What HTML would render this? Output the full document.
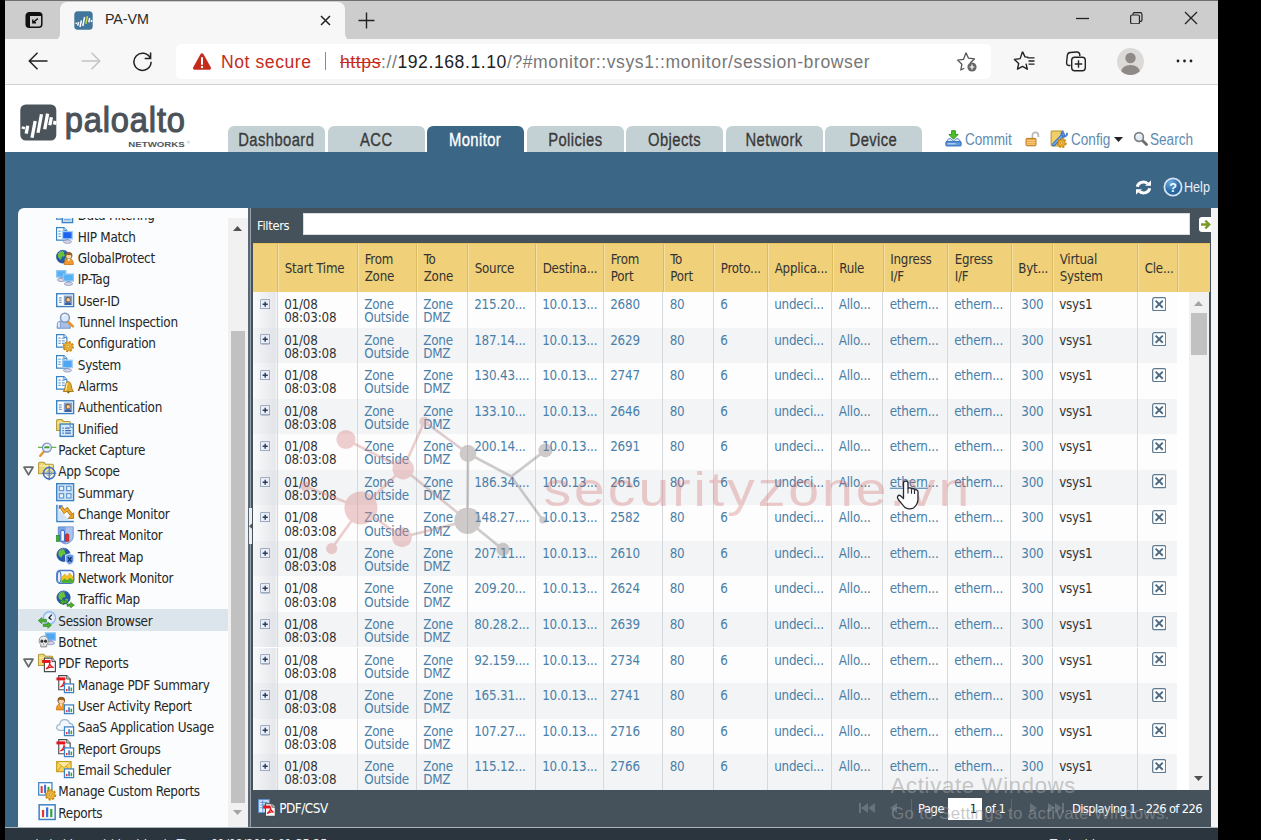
<!DOCTYPE html>
<html lang="en"><head><meta charset="utf-8"><title>PA-VM</title>
<style>
*{box-sizing:border-box;margin:0;padding:0}
html,body{width:1261px;height:840px;overflow:hidden;background:#000}
body{position:relative;font-family:"DejaVu Sans Condensed","Liberation Sans",sans-serif;font-size:12.8px;color:#333}
.abs{position:absolute}
#win{position:absolute;left:5px;top:0;width:1212.5px;height:840px;overflow:hidden;background:#3c6685}
/* browser chrome */
#tabstrip{position:absolute;left:0;top:0;width:100%;height:38.5px;background:#cdcdcd;border-top:1px solid #707070}
#acttab{position:absolute;left:55px;top:1px;width:285px;height:38px;background:#f7f7f7;border-radius:7px 7px 0 0}
#toolbar{position:absolute;left:0;top:38.5px;width:100%;height:46px;background:#f7f7f7;border-bottom:1px solid #d2d2d2}
#addr{position:absolute;left:171px;top:5.5px;width:815px;height:35px;background:#fff;border-radius:5px}
.seg{font-family:"Liberation Sans",sans-serif;white-space:nowrap;position:absolute}
/* page header */
#hdr{position:absolute;left:0;top:84.5px;width:100%;height:67.5px;background:#fff}
.ntab{position:absolute;top:125.5px;height:26.5px;width:97px;background:#c4d1d4;border-radius:6px 6px 0 0;text-align:center;color:#3a3a3a}
.ntab.on{background:#3c6685;color:#fff}
.ntab span{display:inline-block;font-family:"Liberation Sans",sans-serif;font-size:17.6px;line-height:29.5px;transform:scaleX(.84);transform-origin:50% 50%;white-space:nowrap;letter-spacing:.5px;-webkit-text-stroke:.35px currentColor}
.tl{position:absolute;font-family:"Liberation Sans",sans-serif;font-size:15.6px;color:#5d8bb2;white-space:nowrap;transform:scaleX(.87);transform-origin:0 50%;line-height:20px}
/* sidebar */
#side{position:absolute;left:13px;top:207.5px;width:230px;height:620px;background:#fafcfd;border-radius:6px 0 0 0;overflow:hidden}
#tree{position:absolute;left:0;top:10.3px;width:211px;height:610px;overflow:hidden}
.ti{position:absolute;left:0;width:211px;height:21.33px;line-height:21.33px;white-space:nowrap;color:#262626;font-size:13.4px;letter-spacing:-.3px}
.ti.sel{background:#dde5ec}
.ti svg{position:absolute;top:1.4px;width:18.3px;height:18.3px;overflow:visible}
.ti b{font-weight:normal;position:absolute;top:1.3px}
#sscroll{position:absolute;left:210px;top:10.3px;width:20px;height:610px;background:#f1f1f1}
#sthumb{position:absolute;left:3px;top:113px;width:14px;height:472px;background:#c1c1c1}
/* grid */
#grid{position:absolute;left:245px;top:207.5px;width:961px;height:619px;background:#45525c}
#gridwhite{position:absolute;left:1206px;top:207.5px;width:7px;height:619px;background:#f4f4f4}
#split{position:absolute;left:243px;top:207.5px;width:1.6px;height:619.5px;background:#5a6673}
#split2{position:absolute;left:244.5px;top:207.5px;width:1px;height:619.5px;background:#97a1ab}
#filters{position:absolute;left:7px;top:0;height:35px;line-height:35px;color:#fff;font-size:12.8px;letter-spacing:-.3px}
#finput{position:absolute;left:53px;top:5px;width:887px;height:22.5px;background:#fff;border:1px solid #d8dde2}
#ghead{position:absolute;left:3px;top:35px;width:956.5px;height:49.5px;background:#f0d078;border-top:1.5px solid #e9c45e}
.hc{position:absolute;top:0;height:48px;border-left:1px solid #f6e0a2;box-shadow:-1px 0 0 #dcbb5e;font-size:13.2px;letter-spacing:-.2px;line-height:17.5px;color:#333;padding-left:5.7px;white-space:nowrap;overflow:hidden;display:flex;align-items:center;padding-top:1.6px}
#gbody{position:absolute;left:2.5px;top:84.5px;width:956.5px;height:497.5px;background:#fff;overflow:hidden}
.row{position:absolute;left:0;width:924px;height:35.55px;background:#fdfdfd}
.row.alt{background:#f2f4f6}
.c{position:absolute;top:0;height:35.55px;border-left:1px solid #d6d9dc;padding:6px 0 0 6.7px;font-size:13.3px;letter-spacing:-.2px;line-height:13.2px;color:#4a7fa8;white-space:nowrap;overflow:hidden}
.c.k{color:#333}
.c.r{text-align:right;padding-right:8px}
.c.x{border-left:none;background:linear-gradient(90deg,#fafafb,#e6e8ec 92%,#f6f7f8)}
.row.alt .c.x{background:linear-gradient(90deg,#f3f4f6,#e1e4e9 92%,#eef0f2)}
#gscroll{position:absolute;left:936px;top:0;width:20.5px;height:497.5px;background:#f1f1f1}
#gthumb{position:absolute;left:2.5px;top:21px;width:15.5px;height:41.5px;background:#c1c1c1}
#gfoot{position:absolute;left:0;top:582px;width:961px;height:37px;background:#45525c;color:#fff}
#footer{position:absolute;left:0;top:827.5px;width:100%;height:13px;background:#2b353e;overflow:hidden}
#footline{position:absolute;left:0;top:826.5px;width:100%;height:1.2px;background:#aab4bb}

</style></head><body>
<div id="win"><div id="tabstrip"><div id="acttab"></div><svg class="abs" style="left:19.5px;top:9.5px" width="18" height="18" viewBox="0 0 18 18"><rect x="1.200" y="1.800" width="15.600" height="14.400" rx="3" fill="none" stroke="#111" stroke-width="1.500"/><path d="M1.200 5H16.800V4.500Q16.800 1.800 14 1.800H4Q1.200 1.800 1.200 4.500Z" fill="#111"/><path d="M1.200 4H5V16.200H4Q1.200 16.200 1.200 13.500Z" fill="#111"/><path d="M12.800 7.600L8.400 11.200M7.800 8.600V11.800H11" fill="none" stroke="#111" stroke-width="1.400"/></svg><div class="abs" style="left:49px;top:32.500px;width:6px;height:6px;background:#f7f7f7"><div style="width:6px;height:6px;background:#cdcdcd;border-radius:0 0 6px 0"></div></div><div class="abs" style="left:340px;top:32.500px;width:6px;height:6px;background:#f7f7f7"><div style="width:6px;height:6px;background:#cdcdcd;border-radius:0 0 0 6px"></div></div><svg class="abs" style="left:68.5px;top:9.5px" width="19" height="19" viewBox="0 0 19 19"><rect x=".3" y=".3" width="18.400" height="18.400" rx="3.500" fill="#41759b"/><g stroke="#fff" stroke-width="1.500"><path d="M2.400 11.600l-.3 1.400"/><path d="M4.600 11l-.8 3.600"/><path d="M7.400 9.400l-1.400 6.600"/><path d="M10.600 6l-1.800 9"/><path d="M13.400 5.200l-1.500 7.600" stroke="#c3d94e"/><path d="M15.700 7l-.9 4.400"/><path d="M17.700 9l-.4 2"/></g></svg><div class="seg" style="left:100px;top:10.200px;font-size:14.300px;line-height:16px;color:#2a2a2a;letter-spacing:-.1px">PA-VM</div><svg class="abs" style="left:314.5px;top:13.5px" width="11" height="11" viewBox="0 0 11 11"><path d="M1 1L10 10M10 1L1 10" stroke="#222" stroke-width="1.5"/></svg><svg class="abs" style="left:352.5px;top:10.5px" width="17" height="17" viewBox="0 0 17 17"><path d="M8.5 .5V16.5M.5 8.5H16.5" stroke="#222" stroke-width="1.4"/></svg><svg class="abs" style="left:1070.5px;top:15.5px" width="13" height="3" viewBox="0 0 13 3"><path d="M0 1.5H13" stroke="#222" stroke-width="1.3"/></svg><svg class="abs" style="left:1125.3px;top:10.600px" width="12.600" height="12.600" viewBox="0 0 14 14"><rect x=".7" y="3.3" width="9.8" height="9.8" rx="1.5" fill="none" stroke="#222" stroke-width="1.3"/><path d="M3.5 3V2.2Q3.5 .7 5 .7H11.3Q13.3 .7 13.3 2.7V9Q13.3 10.5 11.8 10.5H11" fill="none" stroke="#222" stroke-width="1.3"/></svg><svg class="abs" style="left:1178.5px;top:10px" width="14" height="14" viewBox="0 0 14 14"><path d="M1 1L13 13M13 1L1 13" stroke="#222" stroke-width="1.3"/></svg></div><div id="toolbar"><svg class="abs" style="left:22.5px;top:12.5px" width="21" height="20" viewBox="0 0 21 20"><path d="M19.5 10H2M9.5 1.8L1.3 10L9.5 18.2" fill="none" stroke="#222" stroke-width="1.5"/></svg><svg class="abs" style="left:75px;top:12.5px" width="21" height="20" viewBox="0 0 21 20"><path d="M1.5 10H19M11.5 1.8L19.7 10L11.5 18.2" fill="none" stroke="#c4c4c4" stroke-width="1.5"/></svg><svg class="abs" style="left:127px;top:12px" width="21" height="21" viewBox="0 0 21 21"><path d="M18.3 7.2A8.6 8.6 0 1 0 19.1 10.8" fill="none" stroke="#222" stroke-width="1.5"/><path d="M18.6 1.5V7.4H12.7" fill="none" stroke="#222" stroke-width="1.5"/></svg><div id="addr"><svg class="abs" style="left:15.5px;top:7.5px" width="20" height="19" viewBox="0 0 20 19"><path d="M10 1.2Q10.9 1.2 11.4 2.1L18.9 15.6Q19.6 17.6 17.6 17.8H2.4Q.4 17.6 1.1 15.6L8.6 2.1Q9.1 1.2 10 1.2Z" fill="#c42b1c"/><path d="M10 6v6" stroke="#fff" stroke-width="2" stroke-linecap="round"/><circle cx="10" cy="15" r="1.2" fill="#fff"/></svg><div class="seg" id="notsec" style="left:45px;top:7.4px;font-size:17.6px;line-height:22px;color:#c42b1c;letter-spacing:.55px">Not secure</div><div class="abs" style="left:149px;top:8px;width:1px;height:18px;background:#8a8a8a"></div><div class="seg" id="url" style="left:164px;top:7.4px;font-size:17.6px;line-height:22px;color:#777;letter-spacing:.57px"><span style="color:#c42b1c;text-decoration:line-through">https</span>://<span style="color:#222">192.168.1.10</span>/?#monitor::vsys1::monitor/session-browser</div><svg class="abs" style="left:780px;top:6.5px" width="23" height="22" viewBox="0 0 23 22"><path d="M10 1.8l2.5 5.4 5.9.7-4.3 4M8.2 17.2L4.8 19l1.1-5.8-4.3-4.1 5.9-.7L10 1.8" fill="none" stroke="#555" stroke-width="1.3" stroke-linejoin="round"/><circle cx="16" cy="16" r="4.6" fill="#666"/><path d="M16 13.6v4.8M13.6 16h4.8" stroke="#fff" stroke-width="1.2"/></svg></div><svg class="abs" style="left:1007.5px;top:11.5px" width="23" height="22" viewBox="0 0 23 22"><path d="M9.5 1.6l2.5 5.3 3.2.4M13 13.6l1.3 5.6-4.8-2.8-5 2.8 1.2-5.7L1.4 9.400l5.800-.8L9.5 1.600" fill="none" stroke="#222" stroke-width="1.4" stroke-linejoin="round"/><path d="M14.500 7.800H21.500M15.500 11H21.500M15.500 14.200H21.500" stroke="#222" stroke-width="1.300"/></svg><svg class="abs" style="left:1060px;top:12px" width="22" height="22" viewBox="0 0 22 22"><path d="M5.500 14.500H4.500Q1.300 14.500 1.600 11.300L2.300 4.500Q2.600 1.800 5.300 1.500L11.500 1Q14.300 .8 14.800 3.500V5" fill="none" stroke="#222" stroke-width="1.400"/><rect x="6.700" y="6.200" width="13.600" height="13.600" rx="3" fill="#f7f7f7" stroke="#222" stroke-width="1.400"/><path d="M13.500 9.300v7.400M9.800 13h7.400" stroke="#222" stroke-width="1.400"/></svg><svg class="abs" style="left:1111.500px;top:9px" width="27" height="27" viewBox="0 0 27 27"><defs><clipPath id="pc"><circle cx="13.500" cy="13.500" r="13.500"/></clipPath></defs><circle cx="13.500" cy="13.500" r="13.500" fill="#dcdad8"/><g clip-path="url(#pc)" fill="#8f8a88"><circle cx="13.500" cy="10" r="5.200"/><ellipse cx="13.500" cy="24" rx="9.500" ry="7"/></g></svg><svg class="abs" style="left:1170.500px;top:20.500px" width="17" height="4" viewBox="0 0 17 4"><circle cx="2" cy="2" r="1.400" fill="#222"/><circle cx="8.500" cy="2" r="1.400" fill="#222"/><circle cx="15" cy="2" r="1.400" fill="#222"/></svg></div><div id="hdr"></div><svg class="abs" style="left:15px;top:103.5px" width="180" height="46" viewBox="0 0 180 46"><rect x=".3" y=".5" width="36" height="36" rx="5.500" fill="#4b545b"/><g stroke="#fff" stroke-width="3.300"><path d="M3.700 22.600L3 25"/><path d="M7.700 21.800L6.200 29.600"/><path d="M15.200 17L12 33.800"/><path d="M21.500 10.200L18 28.800"/><path d="M27.600 9.600L24.700 25.200"/><path d="M31.400 13.200L29.800 21.200"/><path d="M35.200 16.800L34.400 20.600"/></g><text transform="translate(44.800 27.700) scale(.92 1)" font-family="Liberation Sans,sans-serif" font-size="35.500" fill="#4b5259" stroke="#4b5259" stroke-width="1.150" letter-spacing=".9">paloalto</text><text x="108.300" y="43" font-family="Liberation Sans,sans-serif" font-weight="bold" font-size="7.600" fill="#50575e" textLength="56.500" lengthAdjust="spacingAndGlyphs">NETWORKS</text><text x="167" y="39.500" font-family="Liberation Sans,sans-serif" font-size="4" fill="#6b7279">©</text></svg><div class="ntab" style="left:223.0px"><span>Dashboard</span></div><div class="ntab" style="left:322.5px"><span>ACC</span></div><div class="ntab on" style="left:422.0px"><span>Monitor</span></div><div class="ntab" style="left:521.5px"><span>Policies</span></div><div class="ntab" style="left:621.0px"><span>Objects</span></div><div class="ntab" style="left:720.5px"><span>Network</span></div><div class="ntab" style="left:820.0px"><span>Device</span></div><svg class="abs" style="left:939.5px;top:130px" viewBox="0 0 16 16" width="17" height="17"><path d="M6.200 .6H9.800V4.200H12.400L8 8.600L3.600 4.200H6.200Z" fill="#4cc02c" stroke="#2c8a14" stroke-width=".8"/><path d="M1.200 11.200L3.400 8.200H5.400L7.999 10.400L10.600 8.200H12.600L14.800 11.200Z" fill="#dbe8f6" stroke="#3f78c0" stroke-width=".8"/><rect x=".8" y="11" width="14.400" height="4" rx=".8" fill="#5f9ade" stroke="#2f68b4" stroke-width=".9"/><path d="M2.400 13H10" stroke="#cfe2f8" stroke-width=".9"/></svg><div class="tl" style="left:960px;top:129.5px">Commit</div><svg class="abs" style="left:1018.5px;top:130.5px" viewBox="0 0 16 16" width="16" height="16"><path d="M8.400 7.800V4.600C8.400 2.400 9.800 1.400 11.400 1.400S14.400 2.400 14.400 4.600V6" fill="none" stroke="#b9b9b9" stroke-width="1.700"/><rect x="2" y="7.400" width="10" height="7.400" rx="1" fill="#eea53a" stroke="#b06f12" stroke-width=".9"/><path d="M2.600 9.600H11.400M2.600 11.400H11.400M2.600 13.200H11.400" stroke="#f9d79a" stroke-width=".8"/></svg><svg class="abs" style="left:1044.5px;top:130px" viewBox="0 0 16 16" width="18" height="18"><path d="M1 1.600Q1 .8 1.800 .8H11.400Q12.200 .8 12.200 1.600V13.400Q12.200 14.200 11.400 14.200H1.800Q1 14.200 1 13.400Z" fill="#f0cf6a" stroke="#b8922c" stroke-width=".9"/><path d="M3.400 12.800L11.800 4.200" stroke="#2f6cc0" stroke-width="3.200" stroke-linecap="round"/><path d="M3.400 12.800L11.800 4.200" stroke="#6ea6ee" stroke-width="1.600" stroke-linecap="round"/><circle cx="12.600" cy="3.400" r="2.400" fill="none" stroke="#3f7cd4" stroke-width="1.600" stroke-dasharray="11 4" transform="rotate(-20 12.600 3.400)"/><circle cx="10.4" cy="11.6" r="3.4" fill="none" stroke="#c98a12" stroke-width="2.2" stroke-dasharray="1.75 1.2"/><circle cx="10.4" cy="11.6" r="3" fill="#eeb53a" stroke="#c98a12" stroke-width=".7"/><circle cx="10.4" cy="11.6" r="1.1" fill="#fbe7a8" stroke="#b87a10" stroke-width=".6"/></svg><div class="tl" style="left:1066px;top:129.5px">Config</div><svg class="abs" style="left:1108.5px;top:136.500px" width="9" height="5" viewBox="0 0 9 5"><path d="M0 0H9L4.500 5Z" fill="#222"/></svg><svg class="abs" style="left:1127.5px;top:130.5px" viewBox="0 0 16 16" width="15" height="15"><path d="M9.600 9.600L14.400 14.400" stroke="#6b6b6b" stroke-width="3" stroke-linecap="round"/><circle cx="6.400" cy="6.400" r="4.700" fill="#e4edf7" stroke="#7f7f7f" stroke-width="1.700"/><path d="M3.800 5.600A2.900 2.900 0 0 1 6.600 3.400" stroke="#fff" stroke-width="1.100" fill="none"/></svg><div class="tl" style="left:1145px;top:129.500px">Search</div><svg class="abs" style="left:1129.500px;top:180px" width="17" height="15" viewBox="0 0 17 15"><path d="M2.300 6.800A6.200 5.600 0 0 1 12.600 3.600" fill="none" stroke="#fff" stroke-width="3"/><path d="M10 5.800H16V.4Z" fill="#fff"/><path d="M14.700 8.200A6.200 5.600 0 0 1 4.400 11.400" fill="none" stroke="#fff" stroke-width="3"/><path d="M7 9.200H1V14.600Z" fill="#fff"/></svg><svg class="abs" style="left:1157.500px;top:176.500px" width="20" height="20" viewBox="0 0 20 20"><defs><radialGradient id="hg" cx=".35" cy=".25" r=".9"><stop offset="0" stop-color="#6aa9dc"/><stop offset=".55" stop-color="#2c6ca6"/><stop offset="1" stop-color="#1c558c"/></radialGradient></defs><circle cx="10" cy="10" r="8.600" fill="url(#hg)" stroke="#d4e4f4" stroke-width="1.800"/><text x="10" y="14.600" text-anchor="middle" font-family="Liberation Sans,sans-serif" font-weight="bold" font-size="12.500" fill="#fff">?</text></svg><div class="abs" style="left:1179px;top:176.8px;font-family:'Liberation Sans',sans-serif;font-size:15.2px;line-height:20px;color:#e6eef7;transform:scaleX(.83);transform-origin:0 50%;white-space:nowrap">Help</div><div id="side"><div id="tree"><div class="ti" style="top:-13.63px"><svg style="left:38px" viewBox="0 0 16 16" width="17.07" height="17.07"><path d="M0.5 0.5H6.9L9.5 3.1V11.5H0.5Z" fill="#fff" stroke="#3b82c4" stroke-width="1"/><path d="M6.9 0.5V3.1H9.5" fill="#cfe2f5" stroke="#3b82c4" stroke-width=".8"/><path d="M2.1 3.7H4.1M5.1 3.7H7.7" stroke="#6f9fd0" stroke-width="1.1"/><path d="M2.1 6.0H4.1M5.1 6.0H7.7" stroke="#6f9fd0" stroke-width="1.1"/><path d="M2.1 8.3H4.1M5.1 8.3H7.7" stroke="#6f9fd0" stroke-width="1.1"/><rect x="5.5" y="7" width="9" height="7.5" fill="#d6e6f6" stroke="#3b82c4" stroke-width="1.2"/><path d="M7 9.500H13M7 12H13" stroke="#5d94cf" stroke-width="1"/></svg><b style="left:59.8px">Data Filtering</b></div><div class="ti" style="top:7.70px"><svg style="left:38px" viewBox="0 0 16 16" width="17.07" height="17.07"><path d="M0.5 0.5H6.9L9.5 3.1V11.5H0.5Z" fill="#fff" stroke="#3b82c4" stroke-width="1"/><path d="M6.9 0.5V3.1H9.5" fill="#cfe2f5" stroke="#3b82c4" stroke-width=".8"/><path d="M2.1 3.7H4.1M5.1 3.7H7.7" stroke="#6f9fd0" stroke-width="1.1"/><path d="M2.1 6.0H4.1M5.1 6.0H7.7" stroke="#6f9fd0" stroke-width="1.1"/><path d="M2.1 8.3H4.1M5.1 8.3H7.7" stroke="#6f9fd0" stroke-width="1.1"/><rect x="5.8" y="4" width="8.4" height="6.4" fill="#1e62f0" stroke="#9fcdf5" stroke-width="1.1"/><path d="M9.0 10.4V12.0H11.0V10.4Z" fill="#8f9ad0"/><ellipse cx="10.0" cy="12.8" rx="3.53" ry="1.5" fill="#d4d6e6" stroke="#8c90b8" stroke-width=".7"/></svg><b style="left:59.8px">HIP Match</b></div><div class="ti" style="top:29.03px"><svg style="left:38px" viewBox="0 0 16 16" width="17.07" height="17.07"><circle cx="6" cy="7.6" r="5.6" fill="#2459ad" stroke="#1c4488" stroke-width=".6"/><path d="M2.92 3.68C5.44 2.0 7.68 3.12 6.84 5.08C8.8 6.4799999999999995 7.12 8.16 5.72 7.319999999999999C4.32 8.719999999999999 5.16 10.959999999999999 3.48 9.559999999999999C0.96 8.16 1.2400000000000002 5.08 2.92 3.68Z" fill="#69c23a"/><path d="M7.96 8.719999999999999C10.2 8.16 10.48 10.399999999999999 8.52 11.52C7.4 10.959999999999999 7.12 9.559999999999999 7.96 8.719999999999999Z" fill="#69c23a"/><path d="M1.8000000000000007 5.08A5.04 5.04 0 0 1 7.68 2.84" stroke="#7fb0ee" stroke-width=".6" fill="none" opacity=".7"/><path d="M7.209999999999999 14.45C7.209999999999999 9.89 9.299999999999999 9.32 11.2 9.32C13.1 9.32 15.19 9.89 15.19 14.45Z" fill="#f39a2c" stroke="#c9700f" stroke-width=".7"/><path d="M10.155 9.51L11.2 11.79L12.245 9.51Z" fill="#fff"/><circle cx="11.2" cy="6.66" r="3.135" fill="#8c5a24"/><circle cx="11.2" cy="7.2299999999999995" r="2.1849999999999996" fill="#f8d3a8"/><path d="M8.73 6.47C9.774999999999999 4.76 12.625 4.76 13.669999999999998 6.47C12.149999999999999 5.9 10.25 5.9 8.73 6.47Z" fill="#8c5a24"/></svg><b style="left:59.8px">GlobalProtect</b></div><div class="ti" style="top:50.37px"><svg style="left:38px" viewBox="0 0 16 16" width="17.07" height="17.07"><rect x="0.6" y="0.6" width="8" height="5.6" fill="#56b0f4" stroke="#8cc4f3" stroke-width="1.1"/><path d="M3.5999999999999996 6.199999999999999V7.799999999999999H5.6V6.199999999999999Z" fill="#8f9ad0"/><ellipse cx="4.6" cy="8.6" rx="3.36" ry="1.5" fill="#d4d6e6" stroke="#8c90b8" stroke-width=".7"/><rect x="6.6" y="3.6" width="8.6" height="6" fill="#56b0f4" stroke="#8cc4f3" stroke-width="1.1"/><path d="M9.899999999999999 9.6V11.2H11.899999999999999V9.6Z" fill="#8f9ad0"/><ellipse cx="10.899999999999999" cy="12.0" rx="3.61" ry="1.5" fill="#d4d6e6" stroke="#8c90b8" stroke-width=".7"/></svg><b style="left:59.8px">IP-Tag</b></div><div class="ti" style="top:71.70px"><svg style="left:38px" viewBox="0 0 16 16" width="17.07" height="17.07"><rect x=".6" y="2.400" width="14.800" height="11.200" fill="#fff" stroke="#3b82c4" stroke-width="1.200"/><path d="M2.500 6H5M2.500 8H5M2.500 10H5" stroke="#6f9fd0" stroke-width="1"/><rect x="6.800" y="4" width="7.400" height="8.200" fill="#7ea2d6"/><circle cx="10.500" cy="7.400" r="2.300" fill="#8a5a22"/><circle cx="10.700" cy="7.700" r="1.500" fill="#f4d0a4"/><path d="M7.600 12.200C7.600 10 9 9.800 10.500 9.800S13.400 10 13.400 12.200Z" fill="#3d5f9a"/></svg><b style="left:59.8px">User-ID</b></div><div class="ti" style="top:93.03px"><svg style="left:38px" viewBox="0 0 16 16" width="17.07" height="17.07"><path d="M1 14.200C1 9 3 7.600 5.200 7.600H8.200C10.500 7.600 12.500 9 12.500 14.200Z" fill="#a9bfe4" stroke="#6f8fc8" stroke-width=".8"/><ellipse cx="2.600" cy="11.200" rx="1.500" ry="3" fill="#dfe8f7" stroke="#6f8fc8" stroke-width=".7"/><path d="M10.500 8.500L14.800 12.600" stroke="#e8922a" stroke-width="2.200" stroke-linecap="round"/><circle cx="7.800" cy="5" r="3.900" fill="#d9e8fa" stroke="#8497b8" stroke-width="1.300"/><path d="M5.600 4.200A2.600 2.600 0 0 1 8.400 2.400" stroke="#fff" stroke-width="1" fill="none"/></svg><b style="left:59.8px">Tunnel Inspection</b></div><div class="ti" style="top:114.36px"><svg style="left:38px" viewBox="0 0 16 16" width="17.07" height="17.07"><path d="M0.5 0.5H6.9L9.5 3.1V11.5H0.5Z" fill="#fff" stroke="#3b82c4" stroke-width="1"/><path d="M6.9 0.5V3.1H9.5" fill="#cfe2f5" stroke="#3b82c4" stroke-width=".8"/><path d="M2.1 3.7H4.1M5.1 3.7H7.7" stroke="#6f9fd0" stroke-width="1.1"/><path d="M2.1 6.0H4.1M5.1 6.0H7.7" stroke="#6f9fd0" stroke-width="1.1"/><path d="M2.1 8.3H4.1M5.1 8.3H7.7" stroke="#6f9fd0" stroke-width="1.1"/><circle cx="10.8" cy="11" r="3.8000000000000003" fill="none" stroke="#c98a12" stroke-width="2.2" stroke-dasharray="1.75 1.2"/><circle cx="10.8" cy="11" r="3.4000000000000004" fill="#eeb53a" stroke="#c98a12" stroke-width=".7"/><circle cx="10.8" cy="11" r="1.1" fill="#fbe7a8" stroke="#b87a10" stroke-width=".6"/></svg><b style="left:59.8px">Configuration</b></div><div class="ti" style="top:135.70px"><svg style="left:38px" viewBox="0 0 16 16" width="17.07" height="17.07"><path d="M0.5 0.5H6.9L9.5 3.1V11.5H0.5Z" fill="#fff" stroke="#3b82c4" stroke-width="1"/><path d="M6.9 0.5V3.1H9.5" fill="#cfe2f5" stroke="#3b82c4" stroke-width=".8"/><path d="M2.1 3.7H4.1M5.1 3.7H7.7" stroke="#6f9fd0" stroke-width="1.1"/><path d="M2.1 6.0H4.1M5.1 6.0H7.7" stroke="#6f9fd0" stroke-width="1.1"/><path d="M2.1 8.3H4.1M5.1 8.3H7.7" stroke="#6f9fd0" stroke-width="1.1"/><rect x="5.8" y="4.6" width="8.4" height="6.4" fill="#4fa6f2" stroke="#9fcdf5" stroke-width="1.1"/><path d="M9.0 11.0V12.6H11.0V11.0Z" fill="#8f9ad0"/><ellipse cx="10.0" cy="13.4" rx="3.53" ry="1.5" fill="#d4d6e6" stroke="#8c90b8" stroke-width=".7"/></svg><b style="left:59.8px">System</b></div><div class="ti" style="top:157.03px"><svg style="left:38px" viewBox="0 0 16 16" width="17.07" height="17.07"><path d="M0.5 0.5H6.9L9.5 3.1V11.5H0.5Z" fill="#fff" stroke="#3b82c4" stroke-width="1"/><path d="M6.9 0.5V3.1H9.5" fill="#cfe2f5" stroke="#3b82c4" stroke-width=".8"/><path d="M2.1 3.7H4.1M5.1 3.7H7.7" stroke="#6f9fd0" stroke-width="1.1"/><path d="M2.1 6.0H4.1M5.1 6.0H7.7" stroke="#6f9fd0" stroke-width="1.1"/><path d="M2.1 8.3H4.1M5.1 8.3H7.7" stroke="#6f9fd0" stroke-width="1.1"/><path d="M10.8 5.000000000000001C13.4 5.000000000000001 13.4 9.3 14.0 11.4L15.200000000000001 13.600000000000001H6.4L7.6000000000000005 11.4C8.200000000000001 9.3 8.200000000000001 5.000000000000001 10.8 5.000000000000001Z" fill="#e2ad2a" stroke="#9c7412" stroke-width=".8"/><path d="M10.0 6.000000000000001C9.0 7.800000000000001 9.200000000000001 10.8 8.4 12.8" stroke="#fbe9a6" stroke-width="1" fill="none"/><circle cx="10.8" cy="14.200000000000001" r="1" fill="#8a6510"/></svg><b style="left:59.8px">Alarms</b></div><div class="ti" style="top:178.36px"><svg style="left:38px" viewBox="0 0 16 16" width="17.07" height="17.07"><rect x=".6" y="2.400" width="14.800" height="11.200" fill="#fff" stroke="#3b82c4" stroke-width="1.200"/><path d="M2.500 6H5M2.500 8H5M2.500 10H5" stroke="#6f9fd0" stroke-width="1"/><rect x="6.800" y="4" width="7.400" height="8.200" fill="#7ea2d6"/><circle cx="10.500" cy="7.400" r="2.300" fill="#8a5a22"/><circle cx="10.700" cy="7.700" r="1.500" fill="#f4d0a4"/><path d="M7.600 12.200C7.600 10 9 9.800 10.500 9.800S13.400 10 13.400 12.200Z" fill="#3d5f9a"/></svg><b style="left:59.8px">Authentication</b></div><div class="ti" style="top:199.70px"><svg style="left:38px" viewBox="0 0 16 16" width="17.07" height="17.07"><path d="M0.5 1.7Q0.5 0.5 1.7 0.5H5.1L6.5 2.1H11.5Q12.5 2.1 12.5 3.3V10.0H0.5Z" fill="#ecd777" stroke="#b39a36" stroke-width=".9"/><path d="M1.3 3.5H11.7" stroke="#f9efb6" stroke-width="1"/><rect x="3.600" y="4.400" width="11.600" height="10.800" fill="#d9e8f8" stroke="#3b82c4" stroke-width="1.200"/><path d="M12.400 4.400V7.200H15.200" fill="#fff" stroke="#3b82c4" stroke-width=".8"/><path d="M5.600 8H6.800M8 8H12M5.600 10.200H6.800M8 10.200H13M5.600 12.400H6.800M8 12.400H13" stroke="#2f6fb8" stroke-width="1.100"/></svg><b style="left:59.8px">Unified</b></div><div class="ti" style="top:221.03px"><svg style="left:20px" viewBox="0 0 16 16" width="17.07" height="17.07"><path d="M0 6.400H16" stroke="#52b038" stroke-width="1"/><path d="M5.400 9.800L2 13.800" stroke="#e8962e" stroke-width="2.200" stroke-linecap="round"/><circle cx="7.800" cy="6.600" r="3.900" fill="#e3effc" stroke="#8497b8" stroke-width="1.200"/><path d="M5.600 6.400H10" stroke="#3f9a2a" stroke-width="1.600"/></svg><b style="left:40.3px">Packet Capture</b></div><div class="ti" style="top:242.36px"><svg style="left:5px;top:6px;width:11px;height:10px" viewBox="0 0 11 10"><path d="M1 1.200H10L5.500 8.800Z" fill="#f4f4f4" stroke="#6a6a6a" stroke-width="1.700" stroke-linejoin="round"/></svg><svg style="left:20px" viewBox="0 0 16 16" width="17.07" height="17.07"><path d="M0.5 1.5Q0.5 0.3 1.7 0.3H5.1L6.5 1.9000000000000001H12.5Q13.5 1.9000000000000001 13.5 3.0999999999999996V10.3H0.5Z" fill="#ecd777" stroke="#b39a36" stroke-width=".9"/><path d="M1.3 3.3H12.7" stroke="#f9efb6" stroke-width="1"/><circle cx="9.800" cy="9.800" r="5" fill="#f3e9a8" fill-opacity=".55" stroke="#3f6fc8" stroke-width="1.300"/><path d="M9.800 3.200V16M3.400 9.800H16" stroke="#3f6fc8" stroke-width="1"/><circle cx="9.800" cy="9.800" r="2.200" fill="none" stroke="#7a9ad8" stroke-width=".7"/></svg><b style="left:40.3px">App Scope</b></div><div class="ti" style="top:263.70px"><svg style="left:38px" viewBox="0 0 16 16" width="17.07" height="17.07"><rect x=".6" y=".6" width="14.800" height="14.800" fill="#d3e4f6" stroke="#3b82c4" stroke-width="1.200"/><rect x="2.9" y="2.9" width="3.800" height="3.800" fill="#e9f2fb" stroke="#5a97d2" stroke-width="1"/><rect x="2.9" y="9.3" width="3.800" height="3.800" fill="#e9f2fb" stroke="#5a97d2" stroke-width="1"/><rect x="9.3" y="2.9" width="3.800" height="3.800" fill="#e9f2fb" stroke="#5a97d2" stroke-width="1"/><rect x="9.3" y="9.3" width="3.800" height="3.800" fill="#e9f2fb" stroke="#5a97d2" stroke-width="1"/></svg><b style="left:59.8px">Summary</b></div><div class="ti" style="top:285.03px"><svg style="left:38px" viewBox="0 0 16 16" width="17.07" height="17.07"><path d="M.8 .6V15.200H15.600" fill="none" stroke="#3b82c4" stroke-width="1.300"/><path d="M1.500 4L12 14.500H1.500Z" fill="#cfe2f6"/><path d="M4.400 2.600L7.200 6.800L9.800 4.600L13.400 9.400" fill="none" stroke="#b87614" stroke-width="3"/><path d="M4.400 2.600L7.200 6.800L9.800 4.600L13.400 9.400" fill="none" stroke="#f0b030" stroke-width="1.600"/><path d="M15.400 7.600V12.600H10.600Z" fill="#eaa520" stroke="#a86c10" stroke-width=".7"/><path d="M2.400 1.200H6L2.400 4.800Z" fill="#3f78d0"/></svg><b style="left:59.8px">Change Monitor</b></div><div class="ti" style="top:306.36px"><svg style="left:38px" viewBox="0 0 16 16" width="17.07" height="17.07"><path d="M2 .8H15V9C15 13 11 15.400 8.500 15.600C6 15.400 2 13 2 9Z" fill="#7ea4e2" stroke="#5f88cc" stroke-width=".8"/><path d="M8.500 1.200V15.200C11 15 14.600 12.800 14.600 9V1.200Z" fill="#a9c3ee"/><rect x=".4" y="8.400" width="2.800" height="5" fill="#3cae3a" stroke="#228822" stroke-width=".6"/><path d="M4.200 13.400V4.600Q5.800 2.600 7.400 4.600V13.400Z" fill="#f4f8ff" stroke="#3f6fd0" stroke-width=".9"/><path d="M8.200 13.400V7.600Q9.700 5.800 11.200 7.600V13.400Z" fill="#e03428" stroke="#a81c14" stroke-width=".6"/></svg><b style="left:59.8px">Threat Monitor</b></div><div class="ti" style="top:327.69px"><svg style="left:38px" viewBox="0 0 16 16" width="17.07" height="17.07"><circle cx="6.6" cy="6.8" r="5.8" fill="#2459ad" stroke="#1c4488" stroke-width=".6"/><path d="M3.4099999999999997 2.74C6.02 1.0 8.34 2.16 7.47 4.1899999999999995C9.5 5.64 7.76 7.38 6.31 6.51C4.859999999999999 7.96 5.7299999999999995 10.28 3.9899999999999998 8.83C1.38 7.38 1.67 4.1899999999999995 3.4099999999999997 2.74Z" fill="#69c23a"/><path d="M8.629999999999999 7.96C10.95 7.38 11.239999999999998 9.7 9.209999999999999 10.86C8.049999999999999 10.28 7.76 8.83 8.629999999999999 7.96Z" fill="#69c23a"/><path d="M2.25 4.1899999999999995A5.22 5.22 0 0 1 8.34 1.87" stroke="#7fb0ee" stroke-width=".6" fill="none" opacity=".7"/><path d="M8.400 7.200L12 6L15.600 7.200V11C15.600 13.600 13.400 15.200 12 15.600C10.600 15.200 8.400 13.600 8.400 11Z" fill="#5f94e4" stroke="#dce9fb" stroke-width=".9"/><path d="M10.400 9L13.600 12.800M13.600 9L10.400 12.800" stroke="#16306e" stroke-width="1.200"/></svg><b style="left:59.8px">Threat Map</b></div><div class="ti" style="top:349.03px"><svg style="left:38px" viewBox="0 0 16 16" width="17.07" height="17.07"><rect x=".7" y="2.200" width="14.800" height="11.200" rx="3" fill="#f4f8fd" stroke="#4a7ac4" stroke-width="1.200"/><ellipse cx="2.800" cy="7.800" rx="1.600" ry="5" fill="#e8f0fb" stroke="#4a7ac4" stroke-width=".9"/><path d="M4.800 12.600V8.600L7.600 5.200L9.800 7.600L12 4.400L14.800 8V12.600Z" fill="#f5c21c" stroke="#c69a10" stroke-width=".5"/><path d="M4.800 12.800V11.600L7.400 9.200L9.800 10.800L12.400 8.600L14.800 11V12.800Z" fill="#45b034"/></svg><b style="left:59.8px">Network Monitor</b></div><div class="ti" style="top:370.36px"><svg style="left:38px" viewBox="0 0 16 16" width="17.07" height="17.07"><circle cx="6.6" cy="6.6" r="5.8" fill="#2459ad" stroke="#1c4488" stroke-width=".6"/><path d="M3.4099999999999997 2.54C6.02 0.7999999999999998 8.34 1.96 7.47 3.9899999999999998C9.5 5.4399999999999995 7.76 7.18 6.31 6.31C4.859999999999999 7.76 5.7299999999999995 10.08 3.9899999999999998 8.629999999999999C1.38 7.18 1.67 3.9899999999999998 3.4099999999999997 2.54Z" fill="#69c23a"/><path d="M8.629999999999999 7.76C10.95 7.18 11.239999999999998 9.5 9.209999999999999 10.66C8.049999999999999 10.08 7.76 8.629999999999999 8.629999999999999 7.76Z" fill="#69c23a"/><path d="M2.25 3.9899999999999998A5.22 5.22 0 0 1 8.34 1.67" stroke="#7fb0ee" stroke-width=".6" fill="none" opacity=".7"/><path d="M9.80 9.40L6.60 9.40L6.60 7.90L3.40 10.40L6.60 12.90L6.60 11.40L9.80 11.40Z" fill="#49b030" stroke="#2a7c1a" stroke-width=".5"/><path d="M9.60 14.20L12.80 14.20L12.80 15.70L16.00 13.20L12.80 10.70L12.80 12.20L9.60 12.20Z" fill="#49b030" stroke="#2a7c1a" stroke-width=".5"/></svg><b style="left:59.8px">Traffic Map</b></div><div class="ti sel" style="top:391.69px"><svg style="left:20px" viewBox="0 0 16 16" width="17.07" height="17.07"><circle cx="10" cy="6" r="5.400" fill="#cfe3fa" stroke="#8db6ea" stroke-width="1"/><circle cx="10" cy="6" r="3.800" fill="#e6f1fd"/><path d="M12 3.200L9.600 6L11.800 7.600" fill="none" stroke="#222" stroke-width="1.100"/><path d="M7.40 7.30L3.40 7.30L3.40 5.65L0.20 8.40L3.40 11.15L3.40 9.50L7.40 9.50Z" fill="#49b030" stroke="#2a7c1a" stroke-width=".5"/><path d="M4.60 13.50L8.60 13.50L8.60 15.15L11.80 12.40L8.60 9.65L8.60 11.30L4.60 11.30Z" fill="#49b030" stroke="#2a7c1a" stroke-width=".5"/></svg><b style="left:40.3px">Session Browser</b></div><div class="ti" style="top:413.03px"><svg style="left:20px" viewBox="0 0 16 16" width="17.07" height="17.07"><rect x="6.6" y="0.8" width="8.6" height="6.4" fill="#4fa6f2" stroke="#8cc4f3" stroke-width="1.1"/><path d="M9.899999999999999 7.2V8.8H11.899999999999999V7.2Z" fill="#8f9ad0"/><ellipse cx="10.899999999999999" cy="9.6" rx="3.61" ry="1.5" fill="#d4d6e6" stroke="#8c90b8" stroke-width=".7"/><path d="M1 7.800C1 4.800 3 3.600 5 3.600S9 4.800 9 7.800C9 9.600 8 10.400 7.600 10.800V13H2.400V10.800C2 10.400 1 9.600 1 7.800Z" fill="#ececec" stroke="#8a8a8a" stroke-width=".8"/><ellipse cx="3.400" cy="8" rx="1.300" ry="1.500" fill="#333"/><ellipse cx="6.600" cy="8" rx="1.300" ry="1.500" fill="#333"/><path d="M5 9.800L4.400 11H5.600Z" fill="#444"/><path d="M3.400 12V13M5 12V13M6.600 12V13" stroke="#888" stroke-width=".6"/></svg><b style="left:40.3px">Botnet</b></div><div class="ti" style="top:434.36px"><svg style="left:5px;top:6px;width:11px;height:10px" viewBox="0 0 11 10"><path d="M1 1.200H10L5.500 8.800Z" fill="#f4f4f4" stroke="#6a6a6a" stroke-width="1.700" stroke-linejoin="round"/></svg><svg style="left:20px" viewBox="0 0 16 16" width="17.07" height="17.07"><path d="M0.4 1.5Q0.4 0.3 1.6 0.3H5.0L6.4 1.9000000000000001H12.0Q13.0 1.9000000000000001 13.0 3.0999999999999996V10.100000000000001H0.4Z" fill="#ecd777" stroke="#b39a36" stroke-width=".9"/><path d="M1.2000000000000002 3.3H12.2" stroke="#f9efb6" stroke-width="1"/><path d="M5.6 3.6H12.2L15.2 6.6V15.4H5.6Z" fill="#fdfdfd" stroke="#4a4a4a" stroke-width="1"/><path d="M12.2 3.6V6.6H15.2" fill="#ddd" stroke="#4a4a4a" stroke-width=".8"/><rect x="3.5999999999999996" y="5.2" width="7.3999999999999995" height="2.6" fill="#e6151b"/><path d="M7.0 13.0C9.2 11.8 10.6 9.0 10.2 7.4C9.8 9.4 11.6 11.4 13.799999999999999 11.8C11.2 10.8 8.6 12.0 7.0 13.0Z" fill="none" stroke="#e0181d" stroke-width="1.1"/></svg><b style="left:40.3px">PDF Reports</b></div><div class="ti" style="top:455.69px"><svg style="left:38px" viewBox="0 0 16 16" width="17.07" height="17.07"><path d="M2.4 0.5H9.4L12.4 3.5V12.9H2.4Z" fill="#fdfdfd" stroke="#4a4a4a" stroke-width="1"/><path d="M9.4 0.5V3.5H12.4" fill="#ddd" stroke="#4a4a4a" stroke-width=".8"/><rect x="0.3999999999999999" y="2.1" width="7.8" height="2.6" fill="#e6151b"/><path d="M3.8 10.5C6.0 9.3 7.4 6.5 7.0 4.9C6.6 6.9 8.4 8.9 11.0 9.3C8.4 8.3 5.4 9.5 3.8 10.5Z" fill="none" stroke="#e0181d" stroke-width="1.1"/><rect x="7.4" y="7.8" width="8" height="7.6" fill="#fff" stroke="#3b82c4" stroke-width="1.1"/><path d="M9.4 14.2V12.2" stroke="#e23a30" stroke-width="1.4"/><path d="M11.4 14.2V9.799999999999999" stroke="#3b6fd8" stroke-width="1.4"/><path d="M13.4 14.2V10.999999999999998" stroke="#39a838" stroke-width="1.4"/></svg><b style="left:59.8px">Manage PDF Summary</b></div><div class="ti" style="top:477.03px"><svg style="left:38px" viewBox="0 0 16 16" width="17.07" height="17.07"><path d="M0.39999999999999947 12.2C0.39999999999999947 7.4 2.5999999999999996 6.800000000000001 4.6 6.800000000000001C6.6 6.800000000000001 8.8 7.4 8.8 12.2Z" fill="#f39a2c" stroke="#c9700f" stroke-width=".7"/><path d="M3.4999999999999996 7.0L4.6 9.4L5.699999999999999 7.0Z" fill="#fff"/><circle cx="4.6" cy="4.0" r="3.3" fill="#8c5a24"/><circle cx="4.6" cy="4.6000000000000005" r="2.3" fill="#f8d3a8"/><path d="M1.9999999999999996 3.8000000000000003C3.0999999999999996 2.0 6.1 2.0 7.199999999999999 3.8000000000000003C5.6 3.2 3.5999999999999996 3.2 1.9999999999999996 3.8000000000000003Z" fill="#8c5a24"/><rect x="7.4" y="7.8" width="8" height="7.6" fill="#fff" stroke="#3b82c4" stroke-width="1.1"/><path d="M9.4 14.2V12.2" stroke="#e23a30" stroke-width="1.4"/><path d="M11.4 14.2V9.799999999999999" stroke="#3b6fd8" stroke-width="1.4"/><path d="M13.4 14.2V10.999999999999998" stroke="#39a838" stroke-width="1.4"/></svg><b style="left:59.8px">User Activity Report</b></div><div class="ti" style="top:498.36px"><svg style="left:38px" viewBox="0 0 16 16" width="17.07" height="17.07"><path d="M3.600 10.800C1.400 10.800 .6 9.400 .6 8.200C.6 6.600 2 5.600 3.200 5.800C3.400 3 5.400 1.400 7.600 1.400C9.800 1.400 11.400 2.800 11.800 4.800C13.600 4.600 15 6 15 7.600C15 9.400 13.800 10.800 12 10.800Z" fill="#f2f7fc" stroke="#9bb8d3" stroke-width="1.100"/><rect x="7.4" y="7.8" width="8" height="7.6" fill="#fff" stroke="#3b82c4" stroke-width="1.1"/><path d="M9.4 14.2V12.2" stroke="#e23a30" stroke-width="1.4"/><path d="M11.4 14.2V9.799999999999999" stroke="#3b6fd8" stroke-width="1.4"/><path d="M13.4 14.2V10.999999999999998" stroke="#39a838" stroke-width="1.4"/></svg><b style="left:59.8px">SaaS Application Usage</b></div><div class="ti" style="top:519.69px"><svg style="left:38px" viewBox="0 0 16 16" width="17.07" height="17.07"><path d="M2.4 0.5H9.4L12.4 3.5V12.9H2.4Z" fill="#fdfdfd" stroke="#4a4a4a" stroke-width="1"/><path d="M9.4 0.5V3.5H12.4" fill="#ddd" stroke="#4a4a4a" stroke-width=".8"/><rect x="0.3999999999999999" y="2.1" width="7.8" height="2.6" fill="#e6151b"/><path d="M3.8 10.5C6.0 9.3 7.4 6.5 7.0 4.9C6.6 6.9 8.4 8.9 11.0 9.3C8.4 8.3 5.4 9.5 3.8 10.5Z" fill="none" stroke="#e0181d" stroke-width="1.1"/><rect x="7.4" y="7.8" width="8" height="7.6" fill="#fff" stroke="#3b82c4" stroke-width="1.1"/><path d="M9.4 14.2V12.2" stroke="#e23a30" stroke-width="1.4"/><path d="M11.4 14.2V9.799999999999999" stroke="#3b6fd8" stroke-width="1.4"/><path d="M13.4 14.2V10.999999999999998" stroke="#39a838" stroke-width="1.4"/></svg><b style="left:59.8px">Report Groups</b></div><div class="ti" style="top:541.02px"><svg style="left:38px" viewBox="0 0 16 16" width="17.07" height="17.07"><rect x=".6" y="1.400" width="12.600" height="8.800" fill="#f8d45c" stroke="#c79a1e" stroke-width="1"/><path d="M.8 1.600L6.900 6.600L13 1.600M.8 10L5 5.200M13 10L8.800 5.200" fill="none" stroke="#c79a1e" stroke-width=".8"/><path d="M1.500 1.900L6.900 6.200L12.300 1.900Z" fill="#fdeaa0"/><rect x="7.4" y="7.8" width="8" height="7.6" fill="#fff" stroke="#3b82c4" stroke-width="1.1"/><path d="M9.4 14.2V12.2" stroke="#e23a30" stroke-width="1.4"/><path d="M11.4 14.2V9.799999999999999" stroke="#3b6fd8" stroke-width="1.4"/><path d="M13.4 14.2V10.999999999999998" stroke="#39a838" stroke-width="1.4"/></svg><b style="left:59.8px">Email Scheduler</b></div><div class="ti" style="top:562.36px"><svg style="left:20px" viewBox="0 0 16 16" width="17.07" height="17.07"><rect x=".6" y=".6" width="11.600" height="10.800" fill="#fff" stroke="#3b82c4" stroke-width="1.100"/><path d="M3.200 9.600V3.600" stroke="#e23a30" stroke-width="1.800"/><path d="M6.200 9.600V2.400" stroke="#3b6fd8" stroke-width="1.800"/><path d="M9.200 9.600V4.200" stroke="#39a838" stroke-width="1.800"/><circle cx="11" cy="11.2" r="3.9" fill="none" stroke="#c98a12" stroke-width="2.2" stroke-dasharray="1.75 1.2"/><circle cx="11" cy="11.2" r="3.5" fill="#eeb53a" stroke="#c98a12" stroke-width=".7"/><circle cx="11" cy="11.2" r="1.1" fill="#fbe7a8" stroke="#b87a10" stroke-width=".6"/></svg><b style="left:40.3px">Manage Custom Reports</b></div><div class="ti" style="top:583.69px"><svg style="left:20px" viewBox="0 0 16 16" width="17.07" height="17.07"><rect x="1" y="1.600" width="14" height="12.800" fill="#fff" stroke="#3b82c4" stroke-width="1.300"/><path d="M4.400 12.400V6" stroke="#e23a30" stroke-width="2"/><path d="M8 12.400V3.800" stroke="#3b6fd8" stroke-width="2"/><path d="M11.600 12.400V5.200" stroke="#39a838" stroke-width="2"/></svg><b style="left:40.3px">Reports</b></div></div><div id="sscroll"><div id="sthumb"></div><svg class="abs" style="left:5px;top:8.500px" width="9" height="5" viewBox="0 0 9 5"><path d="M0 5H9L4.500 0Z" fill="#505050"/></svg><svg class="abs" style="left:5px;top:592px" width="9" height="5" viewBox="0 0 9 5"><path d="M0 0H9L4.500 5Z" fill="#a3a3a3"/></svg></div></div><div id="gridwhite"></div><div id="grid"><div id="filters">Filters</div><div id="finput"></div><svg class="abs" style="left:948.500px;top:9.500px" width="12" height="15" viewBox="0 0 12 15"><path d="M3 0H12V15H3Q0 15 0 12V3Q0 0 3 0Z" fill="#fff"/><path d="M2 7.500H10M6.300 3.600L10.300 7.500L6.300 11.400" fill="none" stroke="#7d9a28" stroke-width="2.300"/></svg><div id="ghead"><div class="hc" style="left:0.0px;width:25.0px;border-left:none;box-shadow:none"><span></span></div><div class="hc" style="left:25.0px;width:80.0px"><span>Start Time</span></div><div class="hc" style="left:105.0px;width:59.0px"><span>From<br>Zone</span></div><div class="hc" style="left:164.0px;width:51.0px"><span>To<br>Zone</span></div><div class="hc" style="left:215.0px;width:68.0px"><span>Source</span></div><div class="hc" style="left:283.0px;width:68.0px"><span>Destina...</span></div><div class="hc" style="left:351.0px;width:59.5px"><span>From<br>Port</span></div><div class="hc" style="left:410.5px;width:50.5px"><span>To<br>Port</span></div><div class="hc" style="left:461.0px;width:54.0px"><span>Proto...</span></div><div class="hc" style="left:515.0px;width:64.5px"><span>Applica...</span></div><div class="hc" style="left:579.5px;width:51.0px"><span>Rule</span></div><div class="hc" style="left:630.5px;width:64.5px"><span>Ingress<br>I/F</span></div><div class="hc" style="left:695.0px;width:63.5px"><span>Egress<br>I/F</span></div><div class="hc" style="left:758.5px;width:41.5px"><span>Byt...</span></div><div class="hc" style="left:800.0px;width:85.0px"><span>Virtual<br>System</span></div><div class="hc" style="left:885.0px;width:40.0px"><span>Cle...</span></div><div class="hc" style="left:925px;width:31px"></div></div><div id="gbody"><div class="row" style="top:0.00px"><div class="c x" style="left:0.0px;width:24.0px"><svg class="abs" style="left:7px;top:6.800px" width="10.400" height="10.400" viewBox="0 0 11 11"><rect x=".6" y=".6" width="9.800" height="9.800" rx="1.200" fill="#e9eef7" stroke="#8495b0" stroke-width="1.200"/><path d="M1.300 9.800V1.300H9.800" fill="none" stroke="#f8fafd" stroke-width=".9"/><path d="M2.800 5.500H8.200M5.500 2.800V8.200" stroke="#2c3b58" stroke-width="1.500"/></svg></div><div class="c k" style="left:24.0px;width:80.0px">01/08<br>08:03:08</div><div class="c" style="left:104.0px;width:59.0px">Zone<br>Outside</div><div class="c" style="left:163.0px;width:51.0px">Zone<br>DMZ</div><div class="c" style="left:214.0px;width:68.0px">215.20...</div><div class="c" style="left:282.0px;width:68.0px">10.0.13...</div><div class="c" style="left:350.0px;width:59.5px">2680</div><div class="c" style="left:409.5px;width:50.5px">80</div><div class="c" style="left:460.0px;width:54.0px">6</div><div class="c" style="left:514.0px;width:64.5px">undeci...</div><div class="c" style="left:578.5px;width:51.0px">Allo...</div><div class="c" style="left:629.5px;width:64.5px">ethern...</div><div class="c" style="left:694.0px;width:63.5px">ethern...</div><div class="c r" style="left:757.5px;width:41.5px">300</div><div class="c k" style="left:799.0px;width:85.0px">vsys1</div><div class="c" style="left:884.0px;width:40.0px"><svg class="abs" style="left:14.600px;top:4.500px" width="14.400" height="14.400" viewBox="0 0 15 15"><rect x=".7" y=".7" width="13.600" height="13.600" rx="1.800" fill="#fff" stroke="#5d7a91" stroke-width="1.300"/><path d="M3.800 3.800L11.200 11.200M11.200 3.800L3.800 11.200" stroke="#4c6a82" stroke-width="2"/></svg></div></div><div class="row alt" style="top:35.55px"><div class="c x" style="left:0.0px;width:24.0px"><svg class="abs" style="left:7px;top:6.800px" width="10.400" height="10.400" viewBox="0 0 11 11"><rect x=".6" y=".6" width="9.800" height="9.800" rx="1.200" fill="#e9eef7" stroke="#8495b0" stroke-width="1.200"/><path d="M1.300 9.800V1.300H9.800" fill="none" stroke="#f8fafd" stroke-width=".9"/><path d="M2.800 5.500H8.200M5.500 2.800V8.200" stroke="#2c3b58" stroke-width="1.500"/></svg></div><div class="c k" style="left:24.0px;width:80.0px">01/08<br>08:03:08</div><div class="c" style="left:104.0px;width:59.0px">Zone<br>Outside</div><div class="c" style="left:163.0px;width:51.0px">Zone<br>DMZ</div><div class="c" style="left:214.0px;width:68.0px">187.14...</div><div class="c" style="left:282.0px;width:68.0px">10.0.13...</div><div class="c" style="left:350.0px;width:59.5px">2629</div><div class="c" style="left:409.5px;width:50.5px">80</div><div class="c" style="left:460.0px;width:54.0px">6</div><div class="c" style="left:514.0px;width:64.5px">undeci...</div><div class="c" style="left:578.5px;width:51.0px">Allo...</div><div class="c" style="left:629.5px;width:64.5px">ethern...</div><div class="c" style="left:694.0px;width:63.5px">ethern...</div><div class="c r" style="left:757.5px;width:41.5px">300</div><div class="c k" style="left:799.0px;width:85.0px">vsys1</div><div class="c" style="left:884.0px;width:40.0px"><svg class="abs" style="left:14.600px;top:4.500px" width="14.400" height="14.400" viewBox="0 0 15 15"><rect x=".7" y=".7" width="13.600" height="13.600" rx="1.800" fill="#fff" stroke="#5d7a91" stroke-width="1.300"/><path d="M3.800 3.800L11.200 11.200M11.200 3.800L3.800 11.200" stroke="#4c6a82" stroke-width="2"/></svg></div></div><div class="row" style="top:71.10px"><div class="c x" style="left:0.0px;width:24.0px"><svg class="abs" style="left:7px;top:6.800px" width="10.400" height="10.400" viewBox="0 0 11 11"><rect x=".6" y=".6" width="9.800" height="9.800" rx="1.200" fill="#e9eef7" stroke="#8495b0" stroke-width="1.200"/><path d="M1.300 9.800V1.300H9.800" fill="none" stroke="#f8fafd" stroke-width=".9"/><path d="M2.800 5.500H8.200M5.500 2.800V8.200" stroke="#2c3b58" stroke-width="1.500"/></svg></div><div class="c k" style="left:24.0px;width:80.0px">01/08<br>08:03:08</div><div class="c" style="left:104.0px;width:59.0px">Zone<br>Outside</div><div class="c" style="left:163.0px;width:51.0px">Zone<br>DMZ</div><div class="c" style="left:214.0px;width:68.0px">130.43....</div><div class="c" style="left:282.0px;width:68.0px">10.0.13...</div><div class="c" style="left:350.0px;width:59.5px">2747</div><div class="c" style="left:409.5px;width:50.5px">80</div><div class="c" style="left:460.0px;width:54.0px">6</div><div class="c" style="left:514.0px;width:64.5px">undeci...</div><div class="c" style="left:578.5px;width:51.0px">Allo...</div><div class="c" style="left:629.5px;width:64.5px">ethern...</div><div class="c" style="left:694.0px;width:63.5px">ethern...</div><div class="c r" style="left:757.5px;width:41.5px">300</div><div class="c k" style="left:799.0px;width:85.0px">vsys1</div><div class="c" style="left:884.0px;width:40.0px"><svg class="abs" style="left:14.600px;top:4.500px" width="14.400" height="14.400" viewBox="0 0 15 15"><rect x=".7" y=".7" width="13.600" height="13.600" rx="1.800" fill="#fff" stroke="#5d7a91" stroke-width="1.300"/><path d="M3.800 3.800L11.200 11.200M11.200 3.800L3.800 11.200" stroke="#4c6a82" stroke-width="2"/></svg></div></div><div class="row alt" style="top:106.65px"><div class="c x" style="left:0.0px;width:24.0px"><svg class="abs" style="left:7px;top:6.800px" width="10.400" height="10.400" viewBox="0 0 11 11"><rect x=".6" y=".6" width="9.800" height="9.800" rx="1.200" fill="#e9eef7" stroke="#8495b0" stroke-width="1.200"/><path d="M1.300 9.800V1.300H9.800" fill="none" stroke="#f8fafd" stroke-width=".9"/><path d="M2.800 5.500H8.200M5.500 2.800V8.200" stroke="#2c3b58" stroke-width="1.500"/></svg></div><div class="c k" style="left:24.0px;width:80.0px">01/08<br>08:03:08</div><div class="c" style="left:104.0px;width:59.0px">Zone<br>Outside</div><div class="c" style="left:163.0px;width:51.0px">Zone<br>DMZ</div><div class="c" style="left:214.0px;width:68.0px">133.10...</div><div class="c" style="left:282.0px;width:68.0px">10.0.13...</div><div class="c" style="left:350.0px;width:59.5px">2646</div><div class="c" style="left:409.5px;width:50.5px">80</div><div class="c" style="left:460.0px;width:54.0px">6</div><div class="c" style="left:514.0px;width:64.5px">undeci...</div><div class="c" style="left:578.5px;width:51.0px">Allo...</div><div class="c" style="left:629.5px;width:64.5px">ethern...</div><div class="c" style="left:694.0px;width:63.5px">ethern...</div><div class="c r" style="left:757.5px;width:41.5px">300</div><div class="c k" style="left:799.0px;width:85.0px">vsys1</div><div class="c" style="left:884.0px;width:40.0px"><svg class="abs" style="left:14.600px;top:4.500px" width="14.400" height="14.400" viewBox="0 0 15 15"><rect x=".7" y=".7" width="13.600" height="13.600" rx="1.800" fill="#fff" stroke="#5d7a91" stroke-width="1.300"/><path d="M3.800 3.800L11.200 11.200M11.200 3.800L3.800 11.200" stroke="#4c6a82" stroke-width="2"/></svg></div></div><div class="row" style="top:142.20px"><div class="c x" style="left:0.0px;width:24.0px"><svg class="abs" style="left:7px;top:6.800px" width="10.400" height="10.400" viewBox="0 0 11 11"><rect x=".6" y=".6" width="9.800" height="9.800" rx="1.200" fill="#e9eef7" stroke="#8495b0" stroke-width="1.200"/><path d="M1.300 9.800V1.300H9.800" fill="none" stroke="#f8fafd" stroke-width=".9"/><path d="M2.800 5.500H8.200M5.500 2.800V8.200" stroke="#2c3b58" stroke-width="1.500"/></svg></div><div class="c k" style="left:24.0px;width:80.0px">01/08<br>08:03:08</div><div class="c" style="left:104.0px;width:59.0px">Zone<br>Outside</div><div class="c" style="left:163.0px;width:51.0px">Zone<br>DMZ</div><div class="c" style="left:214.0px;width:68.0px">200.14...</div><div class="c" style="left:282.0px;width:68.0px">10.0.13...</div><div class="c" style="left:350.0px;width:59.5px">2691</div><div class="c" style="left:409.5px;width:50.5px">80</div><div class="c" style="left:460.0px;width:54.0px">6</div><div class="c" style="left:514.0px;width:64.5px">undeci...</div><div class="c" style="left:578.5px;width:51.0px">Allo...</div><div class="c" style="left:629.5px;width:64.5px">ethern...</div><div class="c" style="left:694.0px;width:63.5px">ethern...</div><div class="c r" style="left:757.5px;width:41.5px">300</div><div class="c k" style="left:799.0px;width:85.0px">vsys1</div><div class="c" style="left:884.0px;width:40.0px"><svg class="abs" style="left:14.600px;top:4.500px" width="14.400" height="14.400" viewBox="0 0 15 15"><rect x=".7" y=".7" width="13.600" height="13.600" rx="1.800" fill="#fff" stroke="#5d7a91" stroke-width="1.300"/><path d="M3.800 3.800L11.200 11.200M11.200 3.800L3.800 11.200" stroke="#4c6a82" stroke-width="2"/></svg></div></div><div class="row alt" style="top:177.75px"><div class="c x" style="left:0.0px;width:24.0px"><svg class="abs" style="left:7px;top:6.800px" width="10.400" height="10.400" viewBox="0 0 11 11"><rect x=".6" y=".6" width="9.800" height="9.800" rx="1.200" fill="#e9eef7" stroke="#8495b0" stroke-width="1.200"/><path d="M1.300 9.800V1.300H9.800" fill="none" stroke="#f8fafd" stroke-width=".9"/><path d="M2.800 5.500H8.200M5.500 2.800V8.200" stroke="#2c3b58" stroke-width="1.500"/></svg></div><div class="c k" style="left:24.0px;width:80.0px">01/08<br>08:03:08</div><div class="c" style="left:104.0px;width:59.0px">Zone<br>Outside</div><div class="c" style="left:163.0px;width:51.0px">Zone<br>DMZ</div><div class="c" style="left:214.0px;width:68.0px">186.34....</div><div class="c" style="left:282.0px;width:68.0px">10.0.13...</div><div class="c" style="left:350.0px;width:59.5px">2616</div><div class="c" style="left:409.5px;width:50.5px">80</div><div class="c" style="left:460.0px;width:54.0px">6</div><div class="c" style="left:514.0px;width:64.5px">undeci...</div><div class="c" style="left:578.5px;width:51.0px">Allo...</div><div class="c" style="left:629.5px;width:64.5px">ethern...</div><div class="c" style="left:694.0px;width:63.5px">ethern...</div><div class="c r" style="left:757.5px;width:41.5px">300</div><div class="c k" style="left:799.0px;width:85.0px">vsys1</div><div class="c" style="left:884.0px;width:40.0px"><svg class="abs" style="left:14.600px;top:4.500px" width="14.400" height="14.400" viewBox="0 0 15 15"><rect x=".7" y=".7" width="13.600" height="13.600" rx="1.800" fill="#fff" stroke="#5d7a91" stroke-width="1.300"/><path d="M3.800 3.800L11.200 11.200M11.200 3.800L3.800 11.200" stroke="#4c6a82" stroke-width="2"/></svg></div></div><div class="row" style="top:213.30px"><div class="c x" style="left:0.0px;width:24.0px"><svg class="abs" style="left:7px;top:6.800px" width="10.400" height="10.400" viewBox="0 0 11 11"><rect x=".6" y=".6" width="9.800" height="9.800" rx="1.200" fill="#e9eef7" stroke="#8495b0" stroke-width="1.200"/><path d="M1.300 9.800V1.300H9.800" fill="none" stroke="#f8fafd" stroke-width=".9"/><path d="M2.800 5.500H8.200M5.500 2.800V8.200" stroke="#2c3b58" stroke-width="1.500"/></svg></div><div class="c k" style="left:24.0px;width:80.0px">01/08<br>08:03:08</div><div class="c" style="left:104.0px;width:59.0px">Zone<br>Outside</div><div class="c" style="left:163.0px;width:51.0px">Zone<br>DMZ</div><div class="c" style="left:214.0px;width:68.0px">148.27....</div><div class="c" style="left:282.0px;width:68.0px">10.0.13...</div><div class="c" style="left:350.0px;width:59.5px">2582</div><div class="c" style="left:409.5px;width:50.5px">80</div><div class="c" style="left:460.0px;width:54.0px">6</div><div class="c" style="left:514.0px;width:64.5px">undeci...</div><div class="c" style="left:578.5px;width:51.0px">Allo...</div><div class="c" style="left:629.5px;width:64.5px">ethern...</div><div class="c" style="left:694.0px;width:63.5px">ethern...</div><div class="c r" style="left:757.5px;width:41.5px">300</div><div class="c k" style="left:799.0px;width:85.0px">vsys1</div><div class="c" style="left:884.0px;width:40.0px"><svg class="abs" style="left:14.600px;top:4.500px" width="14.400" height="14.400" viewBox="0 0 15 15"><rect x=".7" y=".7" width="13.600" height="13.600" rx="1.800" fill="#fff" stroke="#5d7a91" stroke-width="1.300"/><path d="M3.800 3.800L11.200 11.200M11.200 3.800L3.800 11.200" stroke="#4c6a82" stroke-width="2"/></svg></div></div><div class="row alt" style="top:248.85px"><div class="c x" style="left:0.0px;width:24.0px"><svg class="abs" style="left:7px;top:6.800px" width="10.400" height="10.400" viewBox="0 0 11 11"><rect x=".6" y=".6" width="9.800" height="9.800" rx="1.200" fill="#e9eef7" stroke="#8495b0" stroke-width="1.200"/><path d="M1.300 9.800V1.300H9.800" fill="none" stroke="#f8fafd" stroke-width=".9"/><path d="M2.800 5.500H8.200M5.500 2.800V8.200" stroke="#2c3b58" stroke-width="1.500"/></svg></div><div class="c k" style="left:24.0px;width:80.0px">01/08<br>08:03:08</div><div class="c" style="left:104.0px;width:59.0px">Zone<br>Outside</div><div class="c" style="left:163.0px;width:51.0px">Zone<br>DMZ</div><div class="c" style="left:214.0px;width:68.0px">207.11...</div><div class="c" style="left:282.0px;width:68.0px">10.0.13...</div><div class="c" style="left:350.0px;width:59.5px">2610</div><div class="c" style="left:409.5px;width:50.5px">80</div><div class="c" style="left:460.0px;width:54.0px">6</div><div class="c" style="left:514.0px;width:64.5px">undeci...</div><div class="c" style="left:578.5px;width:51.0px">Allo...</div><div class="c" style="left:629.5px;width:64.5px">ethern...</div><div class="c" style="left:694.0px;width:63.5px">ethern...</div><div class="c r" style="left:757.5px;width:41.5px">300</div><div class="c k" style="left:799.0px;width:85.0px">vsys1</div><div class="c" style="left:884.0px;width:40.0px"><svg class="abs" style="left:14.600px;top:4.500px" width="14.400" height="14.400" viewBox="0 0 15 15"><rect x=".7" y=".7" width="13.600" height="13.600" rx="1.800" fill="#fff" stroke="#5d7a91" stroke-width="1.300"/><path d="M3.800 3.800L11.200 11.200M11.200 3.800L3.800 11.200" stroke="#4c6a82" stroke-width="2"/></svg></div></div><div class="row" style="top:284.40px"><div class="c x" style="left:0.0px;width:24.0px"><svg class="abs" style="left:7px;top:6.800px" width="10.400" height="10.400" viewBox="0 0 11 11"><rect x=".6" y=".6" width="9.800" height="9.800" rx="1.200" fill="#e9eef7" stroke="#8495b0" stroke-width="1.200"/><path d="M1.300 9.800V1.300H9.800" fill="none" stroke="#f8fafd" stroke-width=".9"/><path d="M2.800 5.500H8.200M5.500 2.800V8.200" stroke="#2c3b58" stroke-width="1.500"/></svg></div><div class="c k" style="left:24.0px;width:80.0px">01/08<br>08:03:08</div><div class="c" style="left:104.0px;width:59.0px">Zone<br>Outside</div><div class="c" style="left:163.0px;width:51.0px">Zone<br>DMZ</div><div class="c" style="left:214.0px;width:68.0px">209.20...</div><div class="c" style="left:282.0px;width:68.0px">10.0.13...</div><div class="c" style="left:350.0px;width:59.5px">2624</div><div class="c" style="left:409.5px;width:50.5px">80</div><div class="c" style="left:460.0px;width:54.0px">6</div><div class="c" style="left:514.0px;width:64.5px">undeci...</div><div class="c" style="left:578.5px;width:51.0px">Allo...</div><div class="c" style="left:629.5px;width:64.5px">ethern...</div><div class="c" style="left:694.0px;width:63.5px">ethern...</div><div class="c r" style="left:757.5px;width:41.5px">300</div><div class="c k" style="left:799.0px;width:85.0px">vsys1</div><div class="c" style="left:884.0px;width:40.0px"><svg class="abs" style="left:14.600px;top:4.500px" width="14.400" height="14.400" viewBox="0 0 15 15"><rect x=".7" y=".7" width="13.600" height="13.600" rx="1.800" fill="#fff" stroke="#5d7a91" stroke-width="1.300"/><path d="M3.800 3.800L11.200 11.200M11.200 3.800L3.800 11.200" stroke="#4c6a82" stroke-width="2"/></svg></div></div><div class="row alt" style="top:319.95px"><div class="c x" style="left:0.0px;width:24.0px"><svg class="abs" style="left:7px;top:6.800px" width="10.400" height="10.400" viewBox="0 0 11 11"><rect x=".6" y=".6" width="9.800" height="9.800" rx="1.200" fill="#e9eef7" stroke="#8495b0" stroke-width="1.200"/><path d="M1.300 9.800V1.300H9.800" fill="none" stroke="#f8fafd" stroke-width=".9"/><path d="M2.800 5.500H8.200M5.500 2.800V8.200" stroke="#2c3b58" stroke-width="1.500"/></svg></div><div class="c k" style="left:24.0px;width:80.0px">01/08<br>08:03:08</div><div class="c" style="left:104.0px;width:59.0px">Zone<br>Outside</div><div class="c" style="left:163.0px;width:51.0px">Zone<br>DMZ</div><div class="c" style="left:214.0px;width:68.0px">80.28.2...</div><div class="c" style="left:282.0px;width:68.0px">10.0.13...</div><div class="c" style="left:350.0px;width:59.5px">2639</div><div class="c" style="left:409.5px;width:50.5px">80</div><div class="c" style="left:460.0px;width:54.0px">6</div><div class="c" style="left:514.0px;width:64.5px">undeci...</div><div class="c" style="left:578.5px;width:51.0px">Allo...</div><div class="c" style="left:629.5px;width:64.5px">ethern...</div><div class="c" style="left:694.0px;width:63.5px">ethern...</div><div class="c r" style="left:757.5px;width:41.5px">300</div><div class="c k" style="left:799.0px;width:85.0px">vsys1</div><div class="c" style="left:884.0px;width:40.0px"><svg class="abs" style="left:14.600px;top:4.500px" width="14.400" height="14.400" viewBox="0 0 15 15"><rect x=".7" y=".7" width="13.600" height="13.600" rx="1.800" fill="#fff" stroke="#5d7a91" stroke-width="1.300"/><path d="M3.800 3.800L11.200 11.200M11.200 3.800L3.800 11.200" stroke="#4c6a82" stroke-width="2"/></svg></div></div><div class="row" style="top:355.50px"><div class="c x" style="left:0.0px;width:24.0px"><svg class="abs" style="left:7px;top:6.800px" width="10.400" height="10.400" viewBox="0 0 11 11"><rect x=".6" y=".6" width="9.800" height="9.800" rx="1.200" fill="#e9eef7" stroke="#8495b0" stroke-width="1.200"/><path d="M1.300 9.800V1.300H9.800" fill="none" stroke="#f8fafd" stroke-width=".9"/><path d="M2.800 5.500H8.200M5.500 2.800V8.200" stroke="#2c3b58" stroke-width="1.500"/></svg></div><div class="c k" style="left:24.0px;width:80.0px">01/08<br>08:03:08</div><div class="c" style="left:104.0px;width:59.0px">Zone<br>Outside</div><div class="c" style="left:163.0px;width:51.0px">Zone<br>DMZ</div><div class="c" style="left:214.0px;width:68.0px">92.159....</div><div class="c" style="left:282.0px;width:68.0px">10.0.13...</div><div class="c" style="left:350.0px;width:59.5px">2734</div><div class="c" style="left:409.5px;width:50.5px">80</div><div class="c" style="left:460.0px;width:54.0px">6</div><div class="c" style="left:514.0px;width:64.5px">undeci...</div><div class="c" style="left:578.5px;width:51.0px">Allo...</div><div class="c" style="left:629.5px;width:64.5px">ethern...</div><div class="c" style="left:694.0px;width:63.5px">ethern...</div><div class="c r" style="left:757.5px;width:41.5px">300</div><div class="c k" style="left:799.0px;width:85.0px">vsys1</div><div class="c" style="left:884.0px;width:40.0px"><svg class="abs" style="left:14.600px;top:4.500px" width="14.400" height="14.400" viewBox="0 0 15 15"><rect x=".7" y=".7" width="13.600" height="13.600" rx="1.800" fill="#fff" stroke="#5d7a91" stroke-width="1.300"/><path d="M3.800 3.800L11.200 11.200M11.200 3.800L3.800 11.200" stroke="#4c6a82" stroke-width="2"/></svg></div></div><div class="row alt" style="top:391.05px"><div class="c x" style="left:0.0px;width:24.0px"><svg class="abs" style="left:7px;top:6.800px" width="10.400" height="10.400" viewBox="0 0 11 11"><rect x=".6" y=".6" width="9.800" height="9.800" rx="1.200" fill="#e9eef7" stroke="#8495b0" stroke-width="1.200"/><path d="M1.300 9.800V1.300H9.800" fill="none" stroke="#f8fafd" stroke-width=".9"/><path d="M2.800 5.500H8.200M5.500 2.800V8.200" stroke="#2c3b58" stroke-width="1.500"/></svg></div><div class="c k" style="left:24.0px;width:80.0px">01/08<br>08:03:08</div><div class="c" style="left:104.0px;width:59.0px">Zone<br>Outside</div><div class="c" style="left:163.0px;width:51.0px">Zone<br>DMZ</div><div class="c" style="left:214.0px;width:68.0px">165.31...</div><div class="c" style="left:282.0px;width:68.0px">10.0.13...</div><div class="c" style="left:350.0px;width:59.5px">2741</div><div class="c" style="left:409.5px;width:50.5px">80</div><div class="c" style="left:460.0px;width:54.0px">6</div><div class="c" style="left:514.0px;width:64.5px">undeci...</div><div class="c" style="left:578.5px;width:51.0px">Allo...</div><div class="c" style="left:629.5px;width:64.5px">ethern...</div><div class="c" style="left:694.0px;width:63.5px">ethern...</div><div class="c r" style="left:757.5px;width:41.5px">300</div><div class="c k" style="left:799.0px;width:85.0px">vsys1</div><div class="c" style="left:884.0px;width:40.0px"><svg class="abs" style="left:14.600px;top:4.500px" width="14.400" height="14.400" viewBox="0 0 15 15"><rect x=".7" y=".7" width="13.600" height="13.600" rx="1.800" fill="#fff" stroke="#5d7a91" stroke-width="1.300"/><path d="M3.800 3.800L11.200 11.200M11.200 3.800L3.800 11.200" stroke="#4c6a82" stroke-width="2"/></svg></div></div><div class="row" style="top:426.60px"><div class="c x" style="left:0.0px;width:24.0px"><svg class="abs" style="left:7px;top:6.800px" width="10.400" height="10.400" viewBox="0 0 11 11"><rect x=".6" y=".6" width="9.800" height="9.800" rx="1.200" fill="#e9eef7" stroke="#8495b0" stroke-width="1.200"/><path d="M1.300 9.800V1.300H9.800" fill="none" stroke="#f8fafd" stroke-width=".9"/><path d="M2.800 5.500H8.200M5.500 2.800V8.200" stroke="#2c3b58" stroke-width="1.500"/></svg></div><div class="c k" style="left:24.0px;width:80.0px">01/08<br>08:03:08</div><div class="c" style="left:104.0px;width:59.0px">Zone<br>Outside</div><div class="c" style="left:163.0px;width:51.0px">Zone<br>DMZ</div><div class="c" style="left:214.0px;width:68.0px">107.27...</div><div class="c" style="left:282.0px;width:68.0px">10.0.13...</div><div class="c" style="left:350.0px;width:59.5px">2716</div><div class="c" style="left:409.5px;width:50.5px">80</div><div class="c" style="left:460.0px;width:54.0px">6</div><div class="c" style="left:514.0px;width:64.5px">undeci...</div><div class="c" style="left:578.5px;width:51.0px">Allo...</div><div class="c" style="left:629.5px;width:64.5px">ethern...</div><div class="c" style="left:694.0px;width:63.5px">ethern...</div><div class="c r" style="left:757.5px;width:41.5px">300</div><div class="c k" style="left:799.0px;width:85.0px">vsys1</div><div class="c" style="left:884.0px;width:40.0px"><svg class="abs" style="left:14.600px;top:4.500px" width="14.400" height="14.400" viewBox="0 0 15 15"><rect x=".7" y=".7" width="13.600" height="13.600" rx="1.800" fill="#fff" stroke="#5d7a91" stroke-width="1.300"/><path d="M3.800 3.800L11.200 11.200M11.200 3.800L3.800 11.200" stroke="#4c6a82" stroke-width="2"/></svg></div></div><div class="row alt" style="top:462.15px"><div class="c x" style="left:0.0px;width:24.0px"><svg class="abs" style="left:7px;top:6.800px" width="10.400" height="10.400" viewBox="0 0 11 11"><rect x=".6" y=".6" width="9.800" height="9.800" rx="1.200" fill="#e9eef7" stroke="#8495b0" stroke-width="1.200"/><path d="M1.300 9.800V1.300H9.800" fill="none" stroke="#f8fafd" stroke-width=".9"/><path d="M2.800 5.500H8.200M5.500 2.800V8.200" stroke="#2c3b58" stroke-width="1.500"/></svg></div><div class="c k" style="left:24.0px;width:80.0px">01/08<br>08:03:08</div><div class="c" style="left:104.0px;width:59.0px">Zone<br>Outside</div><div class="c" style="left:163.0px;width:51.0px">Zone<br>DMZ</div><div class="c" style="left:214.0px;width:68.0px">115.12...</div><div class="c" style="left:282.0px;width:68.0px">10.0.13...</div><div class="c" style="left:350.0px;width:59.5px">2766</div><div class="c" style="left:409.5px;width:50.5px">80</div><div class="c" style="left:460.0px;width:54.0px">6</div><div class="c" style="left:514.0px;width:64.5px">undeci...</div><div class="c" style="left:578.5px;width:51.0px">Allo...</div><div class="c" style="left:629.5px;width:64.5px">ethern...</div><div class="c" style="left:694.0px;width:63.5px">ethern...</div><div class="c r" style="left:757.5px;width:41.5px">300</div><div class="c k" style="left:799.0px;width:85.0px">vsys1</div><div class="c" style="left:884.0px;width:40.0px"><svg class="abs" style="left:14.600px;top:4.500px" width="14.400" height="14.400" viewBox="0 0 15 15"><rect x=".7" y=".7" width="13.600" height="13.600" rx="1.800" fill="#fff" stroke="#5d7a91" stroke-width="1.300"/><path d="M3.800 3.800L11.200 11.200M11.200 3.800L3.800 11.200" stroke="#4c6a82" stroke-width="2"/></svg></div></div><div id="gscroll"><div id="gthumb"></div><svg class="abs" style="left:5.500px;top:8.500px" width="9" height="5" viewBox="0 0 9 5"><path d="M0 5H9L4.500 0Z" fill="#a3a3a3"/></svg><svg class="abs" style="left:5.500px;top:483.500px" width="9" height="5" viewBox="0 0 9 5"><path d="M0 0H9L4.500 5Z" fill="#505050"/></svg></div></div><div id="gfoot"><svg class="abs" style="left:7.500px;top:9.500px" viewBox="0 0 16 16" width="18" height="18"><rect x=".6" y=".6" width="9.400" height="11.400" fill="#e8f1fb" stroke="#5d94d4" stroke-width="1"/><path d="M2 3H8.600M2 5.400H8.600M2 7.800H8.600M4.200 1.400V11.400" stroke="#5d94d4" stroke-width=".9"/><path d="M6.6 4.2H12.4L15.4 7.2V15.399999999999999H6.6Z" fill="#fdfdfd" stroke="#4a4a4a" stroke-width="1"/><path d="M12.4 4.2V7.2H15.4" fill="#ddd" stroke="#4a4a4a" stroke-width=".8"/><rect x="4.6" y="5.800000000000001" width="6.6000000000000005" height="2.6" fill="#e6151b"/><path d="M8.0 12.999999999999998C10.2 11.799999999999999 11.6 8.999999999999998 11.2 7.399999999999999C10.8 9.399999999999999 12.6 11.399999999999999 14.0 11.799999999999999C11.4 10.799999999999999 9.6 11.999999999999998 8.0 12.999999999999998Z" fill="none" stroke="#e0181d" stroke-width="1.1"/></svg><div class="abs" style="left:29.300px;top:10px;font-size:13.400px;line-height:17px;letter-spacing:-.5px;white-space:nowrap">PDF/CSV</div><div class="abs" style="left:609px;top:13px;width:2px;height:10px;background:#66727c"></div><svg class="abs" style="left:611px;top:13px" width="7" height="10" viewBox="0 0 7 10"><path d="M7 0V10L0 5Z" fill="#66727c"/></svg><svg class="abs" style="left:617.5px;top:13px" width="7" height="10" viewBox="0 0 7 10"><path d="M7 0V10L0 5Z" fill="#66727c"/></svg><svg class="abs" style="left:640px;top:13px" width="7" height="10" viewBox="0 0 7 10"><path d="M7 0V10L0 5Z" fill="#66727c"/></svg><div class="abs" style="left:661px;top:9px;width:1px;height:19px;background:#5d6973"></div><div class="abs" style="left:668px;top:10px;font-size:12.800px;line-height:17px;letter-spacing:-.4px">Page</div><div class="abs" style="left:698px;top:8px;width:34px;height:22px;background:#fff;color:#222;font-size:12.800px;line-height:22px;text-align:right;padding-right:5px">1</div><div class="abs" style="left:735px;top:10px;font-size:12.800px;line-height:17px;letter-spacing:-.4px;white-space:nowrap">of 1</div><div class="abs" style="left:761px;top:9px;width:1px;height:19px;background:#5d6973"></div><svg class="abs" style="left:780px;top:13px" width="7" height="10" viewBox="0 0 7 10"><path d="M0 0V10L7 5Z" fill="#66727c"/></svg><svg class="abs" style="left:798px;top:13px" width="7" height="10" viewBox="0 0 7 10"><path d="M0 0V10L7 5Z" fill="#66727c"/></svg><svg class="abs" style="left:804.5px;top:13px" width="7" height="10" viewBox="0 0 7 10"><path d="M0 0V10L7 5Z" fill="#66727c"/></svg><div class="abs" style="left:811.500px;top:13px;width:2px;height:10px;background:#66727c"></div><div class="abs" id="disp" style="left:822px;top:10px;font-size:12.800px;line-height:17px;letter-spacing:-.6px;white-space:nowrap">Displaying 1 - 226 of 226</div></div></div><div id="split"></div><div id="split2"></div><div class="abs" style="left:243.600px;top:508px;width:3.600px;height:36px;background:#eceeef"></div><svg class="abs" style="left:243.800px;top:522.800px" width="3.400" height="6.400" viewBox="0 0 4 7"><path d="M4 0V7L0 3.500Z" fill="#555"/></svg><div id="footline"></div><div id="footer"><div class="abs" style="left:19.500px;top:8.500px;font-size:12.800px;line-height:16px;letter-spacing:-.28px;color:#e6e9ec;white-space:nowrap">admin | Logout | Last Login Time: 01/08/2020 01:35:25</div><div class="abs" style="left:1045px;top:8.500px;font-size:12.800px;line-height:16px;color:#e6e9ec;white-space:nowrap">Tasks | Language</div></div><svg class="abs" style="left:0;top:0;pointer-events:none" width="1212.500" height="840" viewBox="0 0 1212.500 840"><g opacity=".42"><path d="M341.0 439.5L398.2 468.7" stroke="#d98c8c" stroke-width="2.6"/><path d="M398.2 468.7L419.3 421.7" stroke="#d98c8c" stroke-width="2.6"/><path d="M398.2 468.7L355.9 508.0" stroke="#d98c8c" stroke-width="2.6"/><path d="M355.9 508.0L300.5 486.4" stroke="#d98c8c" stroke-width="2.6"/><path d="M355.9 508.0L326.7 548.6" stroke="#d98c8c" stroke-width="2.6"/><path d="M355.9 508.0L397.0 537.2" stroke="#d98c8c" stroke-width="2.6"/><path d="M397.0 537.2L462.5 520.7" stroke="#b58d8d" stroke-width="2.6"/><path d="M398.2 468.7L462.5 520.7" stroke="#b58d8d" stroke-width="2.6"/><path d="M419.3 421.7L463.0 453.5" stroke="#b58d8d" stroke-width="2.6"/><path d="M463.0 453.5L506.3 476.5" stroke="#8f8585" stroke-width="2.6"/><path d="M506.3 476.5L537.8 520.0" stroke="#8f8585" stroke-width="2.6"/><path d="M540.4 450.4L506.3 476.5" stroke="#8f8585" stroke-width="2.6"/><path d="M463.0 453.5L462.5 520.7" stroke="#8f8585" stroke-width="2.6"/><path d="M462.5 520.7L498.0 549.4" stroke="#8f8585" stroke-width="2.6"/><circle cx="341.0" cy="439.5" r="9.6" fill="#d98c8c"/><circle cx="398.2" cy="468.7" r="10.7" fill="#d98c8c"/><circle cx="355.9" cy="508.0" r="16.5" fill="#d98c8c"/><circle cx="326.7" cy="548.6" r="5.6" fill="#d98c8c"/><circle cx="397.0" cy="537.2" r="10" fill="#d98c8c"/><circle cx="419.3" cy="421.7" r="5" fill="#c99a9a"/><circle cx="300.5" cy="486.4" r="5" fill="#d98c8c"/><circle cx="463.0" cy="453.5" r="8.4" fill="#8f8585"/><circle cx="462.5" cy="520.7" r="13.2" fill="#8f8585"/><circle cx="540.4" cy="450.4" r="7" fill="#8f8585"/><circle cx="537.8" cy="520.0" r="3.5" fill="#8f8585"/><circle cx="498.0" cy="549.4" r="6.6" fill="#8f8585"/></g><text transform="translate(538.5 505.5) scale(1.13 1)" font-family="Liberation Sans,sans-serif" font-size="49" letter-spacing="2.600" fill="#cf6060" fill-opacity=".3">securityzone.vn</text><text x="885.5" y="793.2" font-family="Liberation Sans,sans-serif" font-size="22" letter-spacing=".75" fill="#9c9c9c" fill-opacity=".55">Activate Windows</text><text x="886" y="818.6" font-family="Liberation Sans,sans-serif" font-size="17" letter-spacing=".3" fill="#9c9c9c" fill-opacity=".55">Go to Settings to activate Windows.</text><path d="M885 488.300H922.6" stroke="#3f7aa5" stroke-width="1.100"/><g transform="translate(892 480)" opacity=".93"><path d="M6.500 3C6.500 .5 11 .5 11 3V8.400C11.600 7.500 14.300 7.600 14.500 9.200C15.100 8.300 17.300 8.500 17.500 10C18.200 9.300 21 9.700 21 12V19C21 23 19 26 16.500 28C14 29.200 10 29.200 8 27.600C5.500 24.500 2.500 21.500 .8 18.600C-.3 16.800 1.200 14.500 3.200 15.600L6.500 18.600Z" fill="#fff" stroke="#1a1a22" stroke-width="1.300" stroke-linejoin="round"/><path d="M11 8.500V13.500M14.500 9.500V13.800M17.500 10.300V14" stroke="#1a1a22" stroke-width="1.100"/></g></svg></div>
</body></html>
